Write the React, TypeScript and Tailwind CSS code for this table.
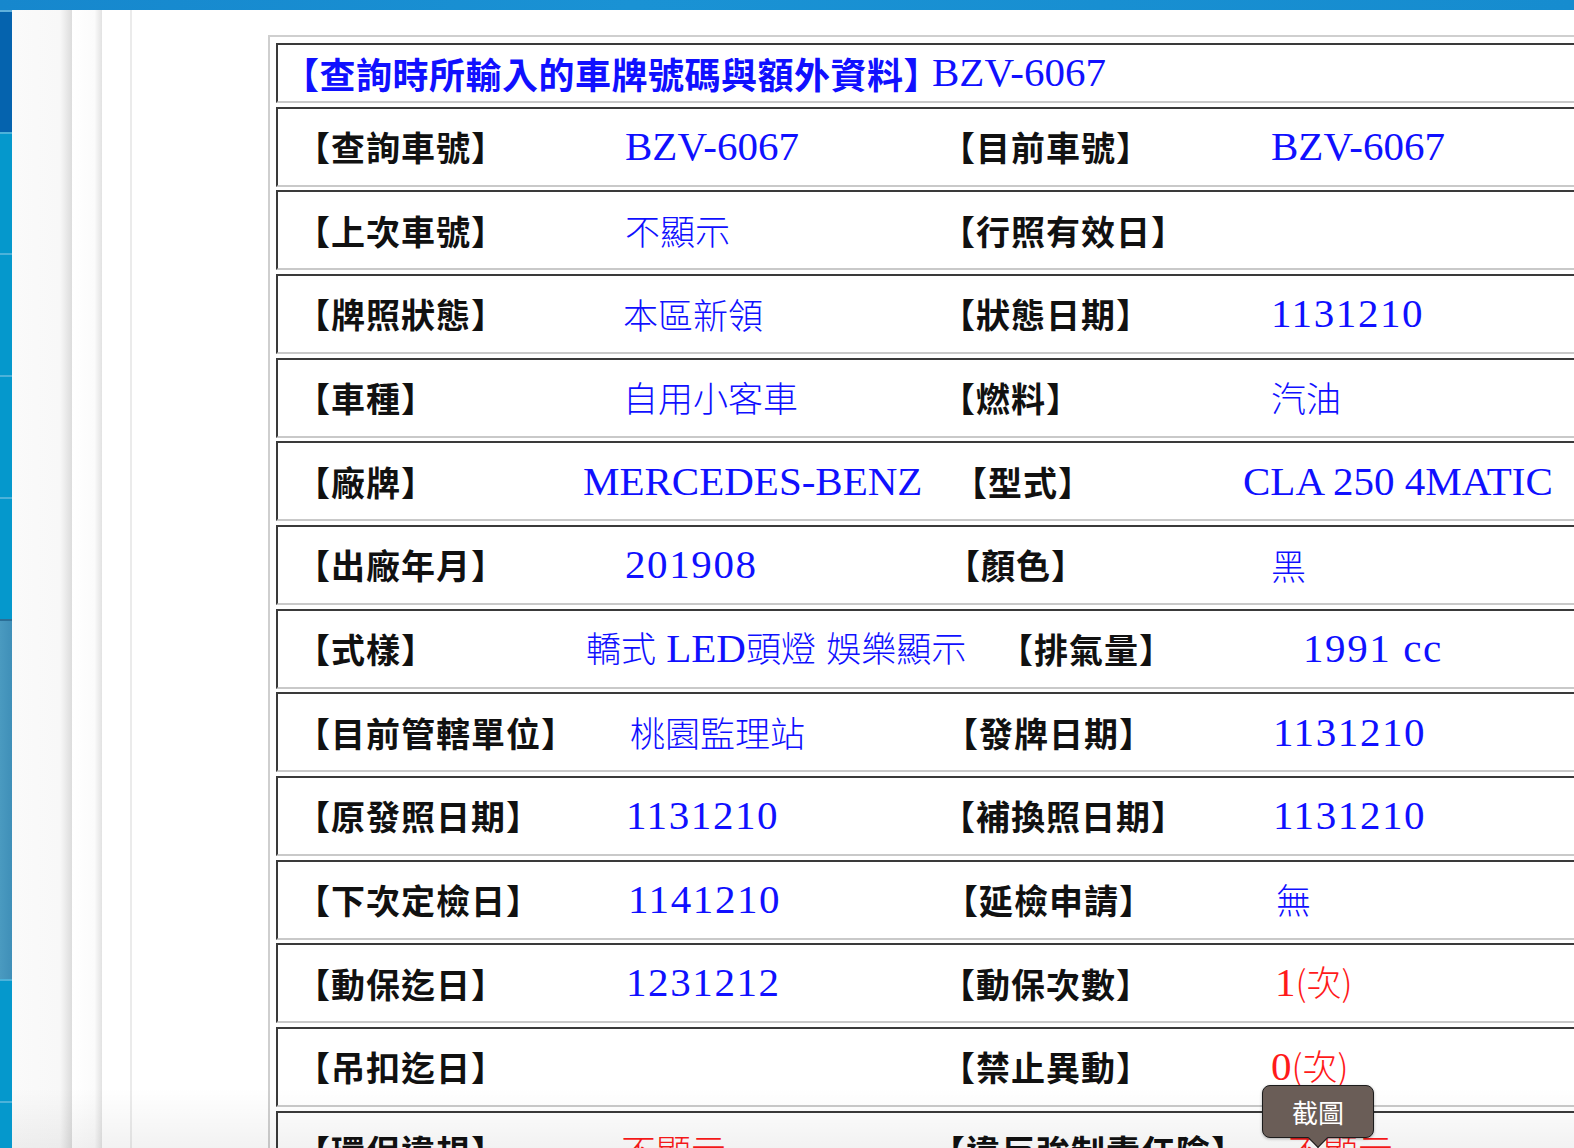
import type {ReactNode} from 'react'

const cjk = '[font-family:"Noto_Sans_CJK_TC","Noto_Sans_CJK_SC",sans-serif]'
const serif = '[font-family:"Liberation_Serif","Noto_Sans_CJK_TC",serif]'

function L({children, second}: {children: ReactNode; second?: boolean}) {
    return (
        <span className={`${cjk} inline-block text-[34px] font-bold tracking-[1px] text-[#111] ${second ? '-ml-[7px]' : ''}`}>
            {children}
        </span>
    )
}

function C({children, red}: {children: ReactNode; red?: boolean}) {
    return <span className={`${cjk} text-[35px] font-light ${red ? 'text-[#ff1a1a]' : 'text-[#1010ff]'}`}>{children}</span>
}

function N({children, red, wide}: {children: ReactNode; red?: boolean; wide?: boolean}) {
    return (
        <span className={`${serif} text-[41px] ${wide ? 'tracking-[1.6px]' : ''} ${red ? 'text-[#ff1a1a]' : 'text-[#1010ff]'}`}>
            {children}
        </span>
    )
}

type Row = {
    cols: [string, string, string]
    l1: string
    v1?: ReactNode
    l2: string
    v2?: ReactNode
}

const rows: Row[] = [
    {cols: ['w-[342px]', 'w-[328px]', 'w-[318px]'], l1: '【查詢車號】', v1: <N>BZV-6067</N>, l2: '【目前車號】', v2: <N>BZV-6067</N>},
    {cols: ['w-[342px]', 'w-[328px]', 'w-[318px]'], l1: '【上次車號】', v1: <C>不顯示</C>, l2: '【行照有效日】'},
    {cols: ['w-[340px]', 'w-[330px]', 'w-[318px]'], l1: '【牌照狀態】', v1: <C>本區新領</C>, l2: '【狀態日期】', v2: <N wide>1131210</N>},
    {cols: ['w-[340px]', 'w-[330px]', 'w-[318px]'], l1: '【車種】', v1: <C>自用小客車</C>, l2: '【燃料】', v2: <C>汽油</C>},
    {cols: ['w-[300px]', 'w-[382px]', 'w-[278px]'], l1: '【廠牌】', v1: <N>MERCEDES-BENZ</N>, l2: '【型式】', v2: <N>CLA 250 4MATIC</N>},
    {cols: ['w-[342px]', 'w-[333px]', 'w-[313px]'], l1: '【出廠年月】', v1: <N wide>201908</N>, l2: '【顏色】', v2: <C>黑</C>},
    {
        cols: ['w-[303px]', 'w-[425px]', 'w-[292px]'],
        l1: '【式樣】',
        v1: (
            <>
                <C>轎式</C>
                <N> LED</N>
                <C>頭燈</C>
                <N> </N>
                <C>娛樂顯示</C>
            </>
        ),
        l2: '【排氣量】',
        v2: <N wide>1991 cc</N>,
    },
    {cols: ['w-[347px]', 'w-[326px]', 'w-[317px]'], l1: '【目前管轄單位】', v1: <C>桃園監理站</C>, l2: '【發牌日期】', v2: <N wide>1131210</N>},
    {cols: ['w-[343px]', 'w-[327px]', 'w-[320px]'], l1: '【原發照日期】', v1: <N wide>1131210</N>, l2: '【補換照日期】', v2: <N wide>1131210</N>},
    {cols: ['w-[345px]', 'w-[328px]', 'w-[320px]'], l1: '【下次定檢日】', v1: <N wide>1141210</N>, l2: '【延檢申請】', v2: <C>無</C>},
    {
        cols: ['w-[343px]', 'w-[327px]', 'w-[322px]'],
        l1: '【動保迄日】',
        v1: <N wide>1231212</N>,
        l2: '【動保次數】',
        v2: (
            <>
                <N red>1</N>
                <C red>(次)</C>
            </>
        ),
    },
    {
        cols: ['w-[343px]', 'w-[327px]', 'w-[318px]'],
        l1: '【吊扣迄日】',
        l2: '【禁止異動】',
        v2: (
            <>
                <N red>0</N>
                <C red>(次)</C>
            </>
        ),
    },
    {cols: ['w-[338px]', 'w-[322px]', 'w-[345px]'], l1: '【環保違規】', v1: <C red>不顯示</C>, l2: '【違反強制責任險】', v2: <C red>不顯示</C>},
]

function Sidebar() {
    return (
        <div className="flex w-[12px] shrink-0 flex-col">
            <div className="h-[2px] bg-[#5fb0dc]"/>
            <div className="h-[120px] bg-[#0563ae]"/>
            <div className="h-[2px] bg-[#4cb2da]"/>
            <div className="h-[119px] bg-[#0598cc]"/>
            <div className="h-[2px] bg-[#4cb2da]"/>
            <div className="h-[120px] bg-[#0598cc]"/>
            <div className="h-[2px] bg-[#4cb2da]"/>
            <div className="h-[120px] bg-[#0598cc]"/>
            <div className="h-[2px] bg-[#4cb2da]"/>
            <div className="h-[120px] bg-[#0598cc]"/>
            <div className="h-[2px] bg-[#2b6e96]"/>
            <div className="h-[358px] bg-[linear-gradient(90deg,#4a9ac0,#3f8fb8)]"/>
            <div className="h-[2px] bg-[#4cb2da]"/>
            <div className="h-[120px] bg-[#0598cc]"/>
            <div className="h-[2px] bg-[#4cb2da]"/>
            <div className="flex-1 bg-[#0598cc]"/>
        </div>
    )
}

function DataRow({row}: {row: Row}) {
    return (
        <div className="flex h-[80px] items-center border-l-2 border-t-2 border-b-2 border-l-[#3a3a3a] border-t-[#3a3a3a] border-b-[#c9c9c9] bg-white">
            <div className={`${row.cols[0]} shrink-0 whitespace-nowrap pl-[18px]`}>
                <L>{row.l1}</L>
            </div>
            <div className={`${row.cols[1]} shrink-0 whitespace-nowrap pl-[5px]`}>{row.v1}</div>
            <div className={`${row.cols[2]} shrink-0 whitespace-nowrap`}>
                <L second>{row.l2}</L>
            </div>
            <div className="shrink-0 whitespace-nowrap pl-[5px]">{row.v2}</div>
        </div>
    )
}

export default function App() {
    return (
        <div className="relative h-[1148px] w-[1574px] overflow-hidden bg-white">
            <div className="h-[10px] bg-[linear-gradient(90deg,#1687cd,#1a92d4_40%,#168ccf)]"/>
            <div className="flex h-[1138px]">
                <Sidebar/>
                <div className="w-[60px] shrink-0 bg-[linear-gradient(90deg,#fafafa_0%,#f8f8f8_80%,#dcdcdc_100%)]"/>
                <div className="w-[30px] shrink-0 bg-[linear-gradient(90deg,#ffffff_0%,#fbfbfb_75%,#e2e2e2_100%)]"/>
                <div className="w-[30px] shrink-0 border-r-2 border-[#ebebeb] bg-white"/>
                <div className="flex-1 pl-[136px] pt-[25px]">
                    <div className="w-[1420px] border-l-2 border-t-2 border-[#cfcfcf] pl-[6px] pt-[6px]">
                        <div className="flex flex-col gap-[3.67px]">
                            <div className="flex h-[60px] items-center border-l-2 border-t-2 border-b-2 border-l-[#3a3a3a] border-t-[#3a3a3a] border-b-[#c9c9c9] pl-[5px]">
                                <span className={`${cjk} text-[36px] font-bold tracking-[0.5px] text-[#1010ff]`}>【查詢時所輸入的車牌號碼與額外資料】</span>
                                <span className="-ml-[8px]">
                                    <N>BZV-6067</N>
                                </span>
                            </div>
                            {rows.map((r) => (
                                <DataRow key={r.l1} row={r}/>
                            ))}
                        </div>
                    </div>
                </div>
            </div>

            <div className="pointer-events-none absolute bottom-0 left-[12px] right-0 h-[60px] bg-[linear-gradient(180deg,rgba(0,0,0,0),rgba(0,0,0,0.05))]"/>

            <div className="absolute left-[1262px] top-[1085px]">
                <div className="relative flex h-[53px] w-[112px] items-center justify-center rounded-[8px] border-[1.5px] border-[#1c1c1c] bg-[#6a5d57] shadow-[0_1px_3px_rgba(0,0,0,0.3)]">
                    <span className={`${cjk} text-[26px] text-white`}>截圖</span>
                    <div className="absolute -bottom-[8px] left-[48px] h-[14px] w-[14px] rotate-45 border-b-[1.5px] border-r-[1.5px] border-[#1c1c1c] bg-[#6a5d57]"/>
                </div>
            </div>
        </div>
    )
}
